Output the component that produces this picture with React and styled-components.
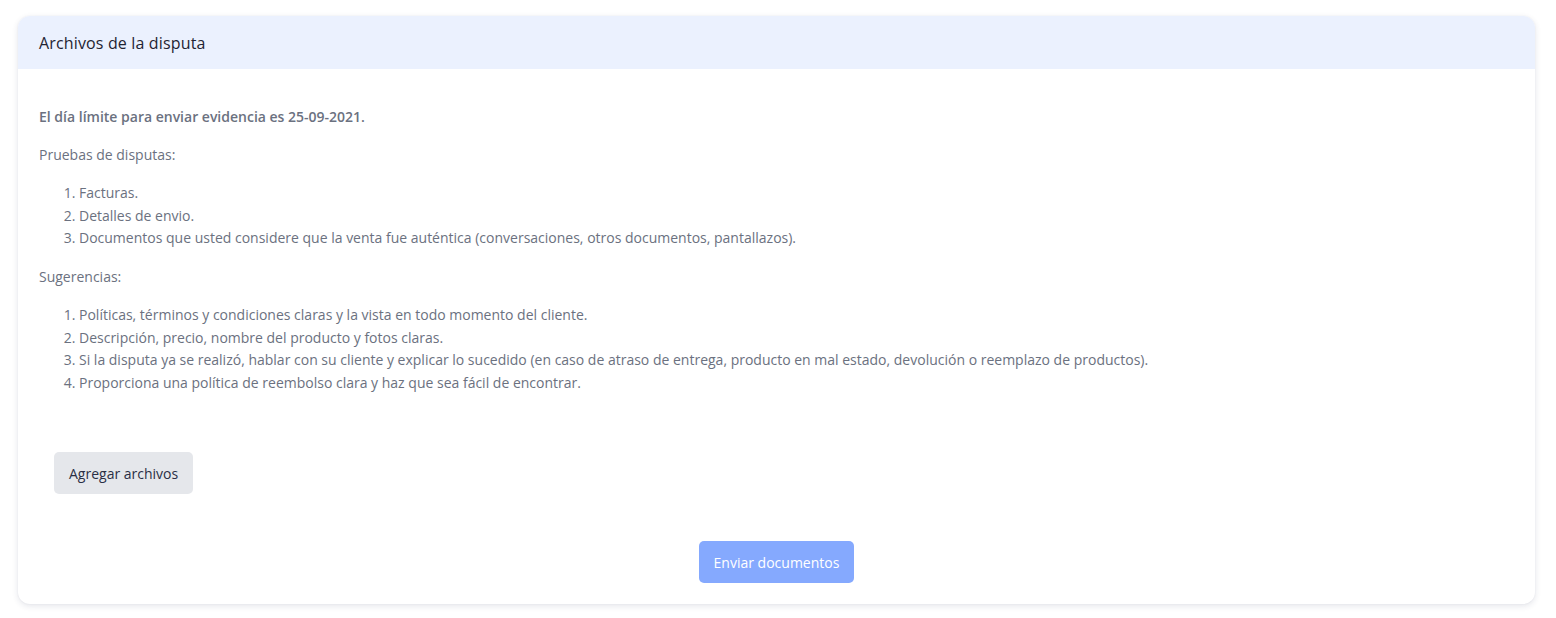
import React from "react";
import styled, { createGlobalStyle } from "styled-components";

const Global = createGlobalStyle`
  html, body { margin: 0; padding: 0; background: #ffffff; }
  body { font-family: "Open Sans", "Noto Sans", sans-serif; }
  * { box-sizing: border-box; }
`;

const Page = styled.div`
  padding: 16px 21px 14px 18px;
`;

const Card = styled.section`
  background: #ffffff;
  border-radius: 12px;
  box-shadow: 0 2px 6px rgba(30, 41, 80, 0.12), 0 0 2px rgba(30, 41, 80, 0.06);
  overflow: hidden;
`;

const Header = styled.header`
  height: 53px;
  background: #ebf1fe;
  display: flex;
  align-items: center;
  padding: 0 21px;
`;

const Title = styled.h2`
  margin: 0;
  font-size: 16px;
  font-weight: 500;
  letter-spacing: 0.15px;
  color: #1f2433;
`;

const Body = styled.div`
  padding: 37px 21px 21px 21px;
  color: #6b7180;
  font-size: 14px;
  line-height: 22.5px;
`;

const Para = styled.p`
  margin: 0 0 15.5px 0;
  font-weight: ${(p) => (p.$bold ? 600 : 400)};
`;

const List = styled.ol`
  margin: 0.5px 0 16.5px 0;
  padding-left: 40px;
  list-style: decimal outside;
`;

const Item = styled.li``;

const UploadRow = styled.div`
  padding: 41.5px 0 0 15px;
`;

const Button = styled.button`
  height: 42px;
  padding: 0 15px;
  border: none;
  border-radius: 5px;
  font-family: inherit;
  font-size: 14px;
  cursor: pointer;
  background: ${(p) => (p.$primary ? "#85a9fe" : "#e5e7eb")};
  color: ${(p) => (p.$primary ? "#ffffff" : "#2a2f45")};
`;

const Footer = styled.div`
  display: flex;
  justify-content: center;
  padding-top: 47px;
`;

export default function App() {
  return (
    <>
      <Global />
      <Page>
        <Card>
          <Header>
            <Title>Archivos de la disputa</Title>
          </Header>
          <Body>
            <Para $bold>El día límite para enviar evidencia es 25-09-2021.</Para>
            <Para>Pruebas de disputas:</Para>
            <List>
              <Item>Facturas.</Item>
              <Item>Detalles de envio.</Item>
              <Item>
                Documentos que usted considere que la venta fue auténtica
                (conversaciones, otros documentos, pantallazos).
              </Item>
            </List>
            <Para>Sugerencias:</Para>
            <List>
              <Item>
                Políticas, términos y condiciones claras y la vista en todo
                momento del cliente.
              </Item>
              <Item>Descripción, precio, nombre del producto y fotos claras.</Item>
              <Item>
                Si la disputa ya se realizó, hablar con su cliente y explicar lo
                sucedido (en caso de atraso de entrega, producto en mal estado,
                devolución o reemplazo de productos).
              </Item>
              <Item>
                Proporciona una política de reembolso clara y haz que sea fácil
                de encontrar.
              </Item>
            </List>
            <UploadRow>
              <Button>Agregar archivos</Button>
            </UploadRow>
            <Footer>
              <Button $primary>Enviar documentos</Button>
            </Footer>
          </Body>
        </Card>
      </Page>
    </>
  );
}
